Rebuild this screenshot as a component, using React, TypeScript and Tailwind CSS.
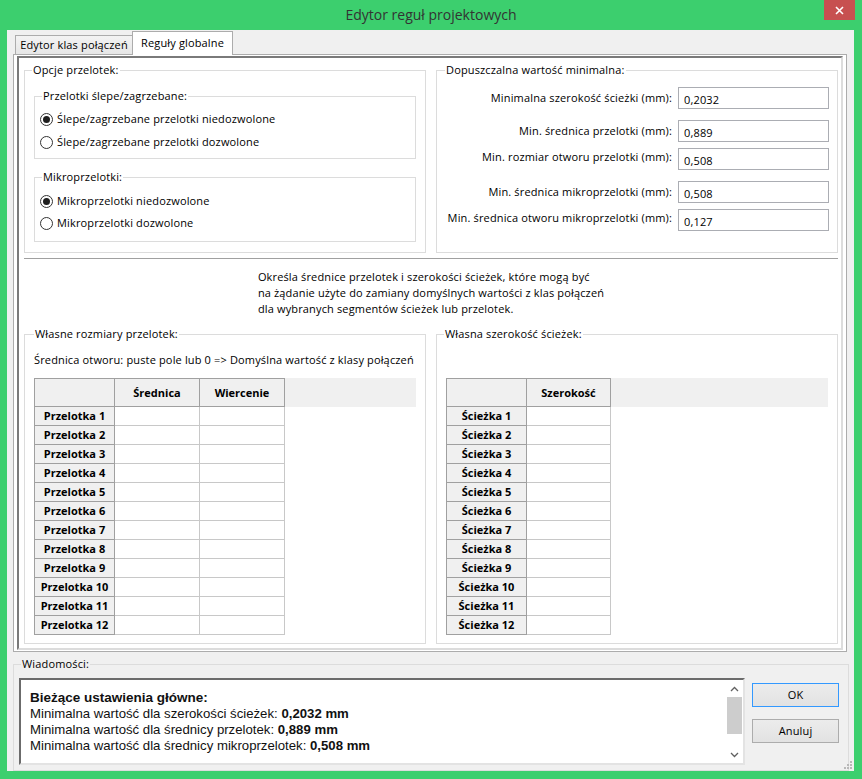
import React from "react";

function Group({
  title,
  className,
  legendClass,
  children,
}: {
  title: string;
  className?: string;
  legendClass?: string;
  children?: React.ReactNode;
}) {
  return (
    <fieldset className={`border border-[#dcdcdc] ${className ?? ""}`}>
      <legend className={`px-[1px] leading-[16px] ${legendClass ?? ""}`}>{title}</legend>
      {children}
    </fieldset>
  );
}

function Radio({ checked, label }: { checked?: boolean; label: string }) {
  return (
    <div className="flex h-[22px] items-center">
      <span className="flex h-[13px] w-[13px] items-center justify-center rounded-full border border-[#333333] bg-white">
        {checked && <span className="h-[7px] w-[7px] rounded-full bg-[#1e1e1e]" />}
      </span>
      <span className="ml-[4px]">{label}</span>
    </div>
  );
}

function Field({ label, value, className, labelClass }: { label: string; value: string; className: string; labelClass?: string }) {
  return (
    <div className={`flex h-[22px] items-center justify-end gap-[6px] ${className}`}>
      <span className={labelClass}>{label}</span>
      <input
        readOnly
        value={value}
        className="h-[22px] w-[151px] border border-[#abadb3] bg-white px-[5px] pt-[2px] text-[11px] tracking-[0.15px] outline-none"
      />
    </div>
  );
}

function SizeGrid({ rowLabel, cols, colW }: { rowLabel: string; cols: string[]; colW: string }) {
  const rows = Array.from({ length: 12 }, (_, i) => i + 1);
  return (
    <div className="font-bold tracking-normal">
      <div className="flex h-[29px] bg-[#f0f0f0]">
        <div className="w-[81px] border border-[#a0a0a0]" />
        {cols.map((c) => (
          <div key={c} className={`${colW} flex items-center justify-center border-y border-r border-[#a0a0a0]`}>
            {c}
          </div>
        ))}
      </div>
      {rows.map((n) => (
        <div key={n} className="flex h-[19px]">
          <div className="flex w-[81px] items-center justify-center border-x border-b border-[#a0a0a0] bg-[#f0f0f0]">
            {rowLabel} {n}
          </div>
          {cols.map((c) => (
            <div key={c} className={`${colW} border-r border-b border-[#c8c8c8]`} />
          ))}
        </div>
      ))}
    </div>
  );
}

function Chevron({ up }: { up?: boolean }) {
  return (
    <svg width="9" height="6" viewBox="0 0 9 6">
      <polyline
        points={up ? "1,5 4.5,1.5 8,5" : "1,1 4.5,4.5 8,1"}
        fill="none"
        stroke="#606060"
        strokeWidth="1.3"
      />
    </svg>
  );
}

export default function App() {
  return (
    <div className="flex h-[779px] w-[862px] flex-col bg-[#3ccf6e] font-['Open_Sans',sans-serif] text-[11px] leading-[16px] tracking-[0.15px] text-black">
      {/* title bar */}
      <div className="flex h-[30px] shrink-0">
        <div className="w-[38px]" />
        <div className="flex flex-1 items-center justify-center text-[14px] tracking-normal text-[#333333]">Edytor reguł projektowych</div>
        <div className="mr-[7px] flex h-[20px] w-[31px] items-center justify-center bg-[#c75050]">
          <svg width="9" height="9" viewBox="0 0 9 9">
            <path d="M1 1 L8 8 M8 1 L1 8" stroke="white" strokeWidth="1.6" />
          </svg>
        </div>
      </div>

      {/* client area */}
      <div className="relative mb-[8px] ml-[7px] mr-[8px] flex flex-1 flex-col bg-[#f0f0f0] pl-[6px] pr-[7px]">
        <div className="mt-[1px] flex h-[23px] items-end pl-[2px]">
          <div className="flex h-[19px] w-[118px] items-center justify-center border border-b-0 border-[#acacac] bg-linear-to-b from-[#f3f3f3] to-[#e6e6e6]">
            Edytor klas połączeń
          </div>
          <div className="relative z-10 -mb-px ml-[-1px] flex h-[24px] w-[101px] items-center justify-center border border-b-0 border-[#acacac] bg-white pb-[2px]">
            Reguły globalne
          </div>
        </div>

        <div className="border border-[#acacac] bg-white px-[3px] pt-[1px] pb-[1px]">
          <div className="border-2 border-t-[#7a7a7a] border-l-[#7a7a7a] border-r-[#dcdcdc] border-b-[#dcdcdc] pb-[4px] pl-[5px] pr-[3px]">
            {/* top options */}
            <div className="mt-[4px] grid grid-cols-2 gap-x-[10px]">
              <Group title="Opcje przelotek:" className="pl-[9px] pr-[9px] pt-[10px] pb-[10px]" legendClass="ml-[-2px]">
                <Group title="Przelotki ślepe/zagrzebane:" className="pl-[5px] pt-[4px] pb-[5px]" legendClass="ml-[2px]">
                  <div className="flex flex-col gap-[1px]">
                    <Radio checked label="Ślepe/zagrzebane przelotki niedozwolone" />
                    <Radio label="Ślepe/zagrzebane przelotki dozwolone" />
                  </div>
                </Group>
                <Group title="Mikroprzelotki:" className="mt-[10px] pl-[5px] pt-[5px] pb-[7px]" legendClass="ml-[2px]">
                  <Radio checked label="Mikroprzelotki niedozwolone" />
                  <Radio label="Mikroprzelotki dozwolone" />
                </Group>
              </Group>

              <Group title="Dopuszczalna wartość minimalna:" className="pl-[8px] pr-[8px]">
                <Field className="mt-[9px]" label="Minimalna szerokość ścieżki (mm):" value="0,2032" />
                <Field className="mt-[11px]" label="Min. średnica przelotki (mm):" value="0,889" />
                <Field className="mt-[6px]" label="Min. rozmiar otworu przelotki (mm):" value="0,508" labelClass="mb-[5px]" />
                <Field className="mt-[11px]" label="Min. średnica mikroprzelotki (mm):" value="0,508" />
                <Field className="mt-[6px]" label="Min. średnica otworu mikroprzelotki (mm):" value="0,127" labelClass="mb-[5px]" />
              </Group>
            </div>

            <div className="mt-[5px] h-px bg-[#a0a0a0]" />

            <div className="mx-auto mt-[10px] w-fit">
              <div>Określa średnice przelotek i szerokości ścieżek, które mogą być</div>
              <div>na żądanie użyte do zamiany domyślnych wartości z klas połączeń</div>
              <div>dla wybranych segmentów ścieżek lub przelotek.</div>
            </div>

            {/* custom sizes */}
            <div className="mt-[9px] grid grid-cols-2 gap-x-[10px]">
              <Group title="Własne rozmiary przelotek:" className="pl-[9px] pr-[9px] pt-[10px] pb-[8px]">
                <div>Średnica otworu: puste pole lub 0 =&gt; Domyślna wartość z klasy połączeń</div>
                <div className="mt-[10px]">
                  <SizeGrid rowLabel="Przelotka" cols={["Średnica", "Wiercenie"]} colW="w-[85px]" />
                </div>
              </Group>
              <Group title="Własna szerokość ścieżek:" className="pl-[9px] pr-[9px] pt-[36px] pb-[8px]" legendClass="ml-[-2px]">
                <SizeGrid rowLabel="Ścieżka" cols={["Szerokość"]} colW="w-[84px]" />
              </Group>
            </div>
          </div>
        </div>

        {/* messages */}
        <Group title="Wiadomości:" className="mt-[4px] w-[836px] pl-[5px] pr-[9px] pt-[6px] pb-[5px]" legendClass="ml-[2px]">
          <div className="flex">
            <div className="flex h-[87px] w-[726px] border-2 border-t-[#6b6b6b] border-l-[#6b6b6b] border-r-[#e3e3e3] border-b-[#e3e3e3] bg-white">
              <div className="flex-1 pl-[9px] pt-[10px] font-['Liberation_Sans',Arial,sans-serif] text-[13.2px] leading-[16px] tracking-normal text-[#111111]">
                <div className="text-[13.5px] font-bold">Bieżące ustawienia główne:</div>
                <div>
                  Minimalna wartość dla szerokości ścieżek: <b>0,2032 mm</b>
                </div>
                <div>
                  Minimalna wartość dla średnicy przelotek: <b>0,889 mm</b>
                </div>
                <div>
                  Minimalna wartość dla średnicy mikroprzelotek: <b>0,508 mm</b>
                </div>
              </div>
              <div className="flex w-[17px] flex-col items-center">
                <div className="flex h-[17px] w-full items-center justify-center">
                  <Chevron up />
                </div>
                <div className="h-[37px] w-[15px] bg-[#cdcdcd]" />
                <div className="flex-1" />
                <div className="flex h-[17px] w-full items-center justify-center">
                  <Chevron />
                </div>
              </div>
            </div>
            <div className="ml-[7px] flex flex-col">
              <button className="mt-[5px] h-[24px] w-[87px] border border-[#3399ff] bg-linear-to-b from-[#ececec] to-[#e2e2e2]">
                OK
              </button>
              <button className="mt-[12px] h-[24px] w-[87px] border border-[#acacac] bg-linear-to-b from-[#ececec] to-[#e2e2e2]">
                Anuluj
              </button>
            </div>
          </div>
        </Group>

        {/* size grip */}
        <svg className="absolute right-[2px] bottom-[2px]" width="10" height="10" viewBox="0 0 10 10">
          {[
            [8, 2],
            [5, 5],
            [8, 5],
            [2, 8],
            [5, 8],
            [8, 8],
          ].map(([x, y]) => (
            <rect key={`${x}-${y}`} x={x} y={y} width="2" height="2" fill="#b8b8b8" />
          ))}
        </svg>
      </div>
    </div>
  );
}
